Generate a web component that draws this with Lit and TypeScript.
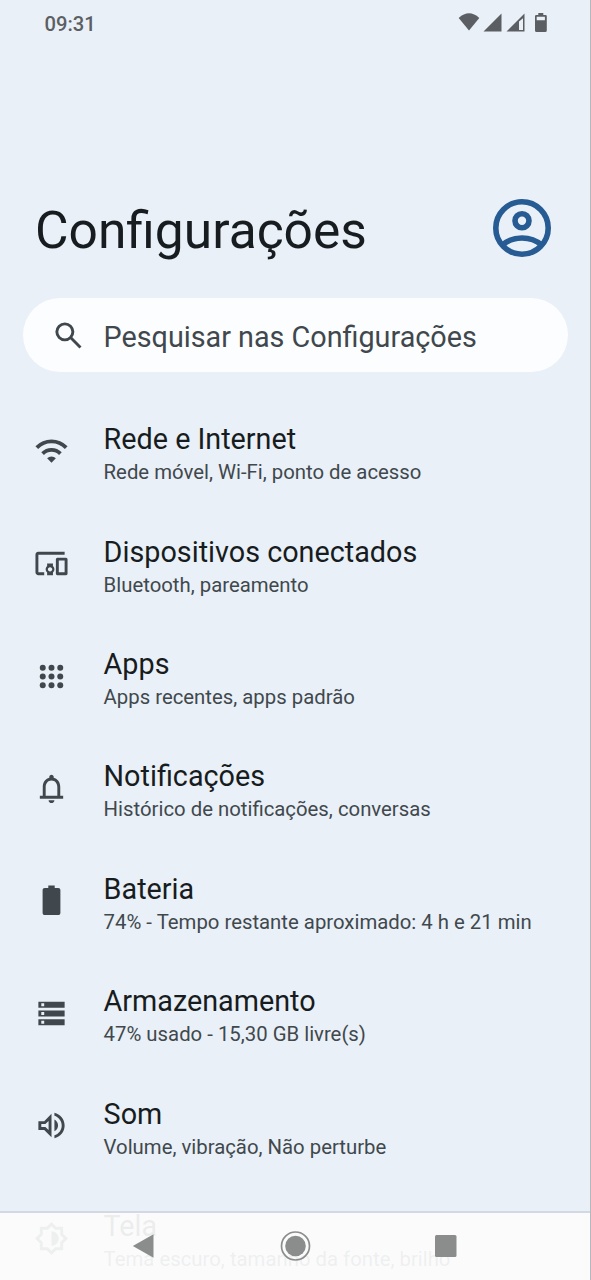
import { LitElement, html, css, svg } from "lit";
import { customElement, property } from "lit/decorators.js";

const icons: Record<string, unknown> = {
  wifi: svg`<g fill="none" stroke="currentColor" stroke-width="2.6"><path d="M1.9 9.4C7.6 3.7 16.400 3.7 22.100 9.4"/><path d="M5.900 13.400c3.400-3.400 8.800-3.400 12.200 0"/></g><path d="M9 16.700a4.200 4.200 0 0 1 6 0L12 19.700z"/>`,
  devices: svg`<path d="M3 6h18V4H3c-1.1 0-2 .9-2 2v12c0 1.1.9 2 2 2h4v-2H3V6zm10 6H9v1.78c-.61.55-1 1.33-1 2.22s.39 1.67 1 2.22V20h4v-1.780c.61-.55 1-1.34 1-2.220s-.39-1.670-1-2.220V12zm-2 5.500c-.83 0-1.500-.67-1.500-1.500s.67-1.500 1.500-1.500 1.500.67 1.500 1.500-.67 1.500-1.500 1.500zM22 8h-6c-.5 0-1 .5-1 1v10c0 .5.5 1 1 1h6c.5 0 1-.5 1-1V9c0-.5-.5-1-1-1zm-1 10h-4v-8h4v8z"/>`,
  apps: svg`${[6, 12, 18].map((y) => [6, 12, 18].map((x) => svg`<circle cx=${x} cy=${y} r="2.05"/>`))}`,
  bell: svg`<path d="M12 22c1.100 0 2-.9 2-2h-4c0 1.100.9 2 2 2zm6-5v-6c0-3.070-1.630-5.640-4.500-6.320V4c0-.83-.67-1.500-1.500-1.500s-1.500.67-1.500 1.500v.68C7.640 5.360 6 7.920 6 11v6H4v2h16v-2h-2zm-2 0H8v-6c0-2.480 1.510-4.500 4-4.500s4 2.020 4 4.500v6z"/>`,
  battery: svg`<path d="M16.600 3.500H14.200V1.700H9.800v1.800H7.400C6.500 3.500 5.900 4.100 5.900 4.900v15.600c0 .8.6 1.400 1.500 1.400h9.200c.9 0 1.500-.6 1.500-1.400V4.900c0-.8-.6-1.400-1.500-1.400z"/>`,
  storage: svg`<path fill-rule="evenodd" d="M3 20h18v-4H3v4zm2-3h2v2H5v-2zM3 4v4h18V4H3zm4 3H5V5h2v2zm-4 7h18v-4H3v4zm2-3h2v2H5v-2z"/>`,
  sound: svg`<path d="M3 9v6h4l5 5V4L7 9H3zm7-.17v6.340L7.830 13H5v-2h2.830L10 8.830zM16.500 12c0-1.770-1.020-3.290-2.500-4.030v8.050c1.480-.73 2.500-2.250 2.500-4.020zM14 3.230v2.060c2.890.86 5 3.540 5 6.710s-2.110 5.850-5 6.710v2.060c4.010-.91 7-4.490 7-8.770s-2.990-7.860-7-8.770z"/>`,
  display: svg`<path d="M20 8.690V4h-4.690L12 .69 8.690 4H4v4.690L.69 12 4 15.310V20h4.690L12 23.310 15.310 20H20v-4.690L23.310 12 20 8.690zm-2 5.790V18h-3.520L12 20.480 9.520 18H6v-3.520L3.520 12 6 9.520V6h3.520L12 3.520 14.480 6H18v3.520L20.480 12 18 14.480zM12 7v10c2.760 0 5-2.240 5-5s-2.240-5-5-5z"/>`,
};

const entries = [
  { icon: "wifi", title: "Rede e Internet", note: "Rede móvel, Wi-Fi, ponto de acesso" },
  { icon: "devices", title: "Dispositivos conectados", note: "Bluetooth, pareamento" },
  { icon: "apps", title: "Apps", note: "Apps recentes, apps padrão" },
  { icon: "bell", title: "Notificações", note: "Histórico de notificações, conversas" },
  { icon: "battery", title: "Bateria", note: "74% - Tempo restante aproximado: 4 h e 21 min" },
  { icon: "storage", title: "Armazenamento", note: "47% usado - 15,30 GB livre(s)" },
  { icon: "sound", title: "Som", note: "Volume, vibração, Não perturbe" },
  { icon: "display", title: "Tela", note: "Tema escuro, tamanho da fonte, brilho" },
];

@customElement("settings-row")
export class SettingsRow extends LitElement {
  @property() icon = "";
  @property() heading = "";
  @property() note = "";

  static styles = css`
    :host {
      display: flex;
      align-items: center;
      height: 112.4px;
      padding-left: 34px;
      box-sizing: border-box;
      flex: none;
    }
    .icon {
      width: 35px;
      height: 35px;
      margin: 0 34.600px 3.600px 0;
      fill: currentColor;
      color: #40484d;
      flex: none;
    }
    .text {
      display: flex;
      flex-direction: column;
      gap: 4px;
      white-space: nowrap;
    }
    .title {
      font-size: 28.750px;
      line-height: 34px;
      color: #171c20;
    }
    .note {
      font-size: 20.330px;
      line-height: 24px;
      color: #40484d;
    }
  `;

  render() {
    return html`
      <svg class="icon" viewBox="0 0 24 24">${icons[this.icon]}</svg>
      <div class="text">
        <span class="title">${this.heading}</span>
        <span class="note">${this.note}</span>
      </div>
    `;
  }
}

@customElement("app-root")
export class AppRoot extends LitElement {
  static styles = css`
    :host {
      display: block;
      position: relative;
      width: 591px;
      height: 1280px;
      overflow: hidden;
      box-sizing: border-box;
      border-right: 1px solid #b4b8bd;
      background: #eaf0f7;
      font-family: Roboto, sans-serif;
      color: #171c20;
    }
    .page {
      display: flex;
      flex-direction: column;
    }
    .status {
      display: flex;
      align-items: center;
      justify-content: space-between;
      height: 48px;
      padding: 0 42px 0 44.500px;
      color: #5b5f63;
    }
    .clock {
      font-size: 20.200px;
      font-weight: 500;
      line-height: 24px;
    }
    .signals {
      width: 90px;
      height: 24px;
      fill: currentColor;
    }
    .header {
      display: flex;
      align-items: center;
      justify-content: space-between;
      height: 90px;
      margin-top: 136px;
      padding: 0 39px 0 35px;
    }
    h1 {
      margin: 4px 0 0;
      font-size: 51.500px;
      font-weight: 400;
      line-height: 62px;
    }
    .avatar {
      width: 58px;
      height: 58px;
      margin-bottom: 2px;
      fill: none;
      stroke: #265b93;
    }
    .search {
      display: flex;
      align-items: center;
      height: 74px;
      margin: 24px 22px 0 23px;
      padding-left: 28px;
      border-radius: 37px;
      background: #fcfdff;
      color: #40484d;
      font-size: 28.750px;
      line-height: 34px;
      white-space: nowrap;
      box-sizing: border-box;
    }
    .search-icon {
      width: 35px;
      height: 35px;
      margin-right: 17.500px;
      fill: none;
      stroke: currentColor;
    }
    .search-text {
      margin-top: 3px;
    }
    .list {
      display: flex;
      flex-direction: column;
      margin-top: 25px;
    }
    .nav {
      position: absolute;
      left: 0;
      right: 0;
      bottom: 0;
      height: 69px;
      box-sizing: border-box;
      border-top: 2px solid #d3d9e2;
      background: rgba(252, 252, 252, 0.93);
      background-clip: padding-box;
      display: flex;
      justify-content: center;
    }
    .keys {
      width: 326px;
      height: 30px;
      margin: 18px 1px 0 0;
      fill: #8b8d8d;
    }
  `;

  render() {
    return html`
      <div class="page">
        <div class="status">
          <span class="clock">09:31</span>
          <svg class="signals" viewBox="0 0 90 24">
            <path d="M.7 6C7.500-.2 14.500-.2 21.300 6L11 18.500z" />
            <path d="M43.500 1.500v18h-18z" />
            <path fill-rule="evenodd" d="M66.500 1.500v18h-18zM65 6.200 61 9.500v8.400h4z" />
            <path fill-rule="evenodd" d="M80.300 1h5v2h2.200q1.300 0 1.300 1.300v14.200q0 1.500-1.500 1.500h-8.800q-1.500 0-1.500-1.500V4.300Q77 3 78.300 3h2zM78.700 4.800v3.400h8.200V4.800z" />
          </svg>
        </div>
        <div class="header">
          <h1>Configurações</h1>
          <svg class="avatar" viewBox="0 0 58 58" stroke-width="5.600">
            <circle cx="29" cy="29" r="26.200" />
            <circle cx="29" cy="21.800" r="7" />
            <path d="M9.500 46C20 36.600 38 36.600 48.500 46" />
          </svg>
        </div>
        <div class="search">
          <svg class="search-icon" viewBox="0 0 24 24" stroke-width="2">
            <circle cx="9.500" cy="9.500" r="5.500" />
            <path d="M13.600 13.600 20.200 20.200" />
          </svg>
          <span class="search-text">Pesquisar nas Configurações</span>
        </div>
        <div class="list">
          ${entries.map(
            (e) => html`<settings-row .icon=${e.icon} .heading=${e.title} .note=${e.note}></settings-row>`
          )}
        </div>
      </div>
      <div class="nav">
        <svg class="keys" viewBox="0 0 326 30">
          <path d="M.8 15 21.500 3.300v23.400z" />
          <circle cx="163.500" cy="15" r="10.300" />
          <circle cx="163.500" cy="15" r="14" fill="none" stroke="#8b8d8d" stroke-width="1.700" />
          <rect x="303" y="4" width="21.500" height="22" rx="1.500" />
        </svg>
      </div>
    `;
  }
}
